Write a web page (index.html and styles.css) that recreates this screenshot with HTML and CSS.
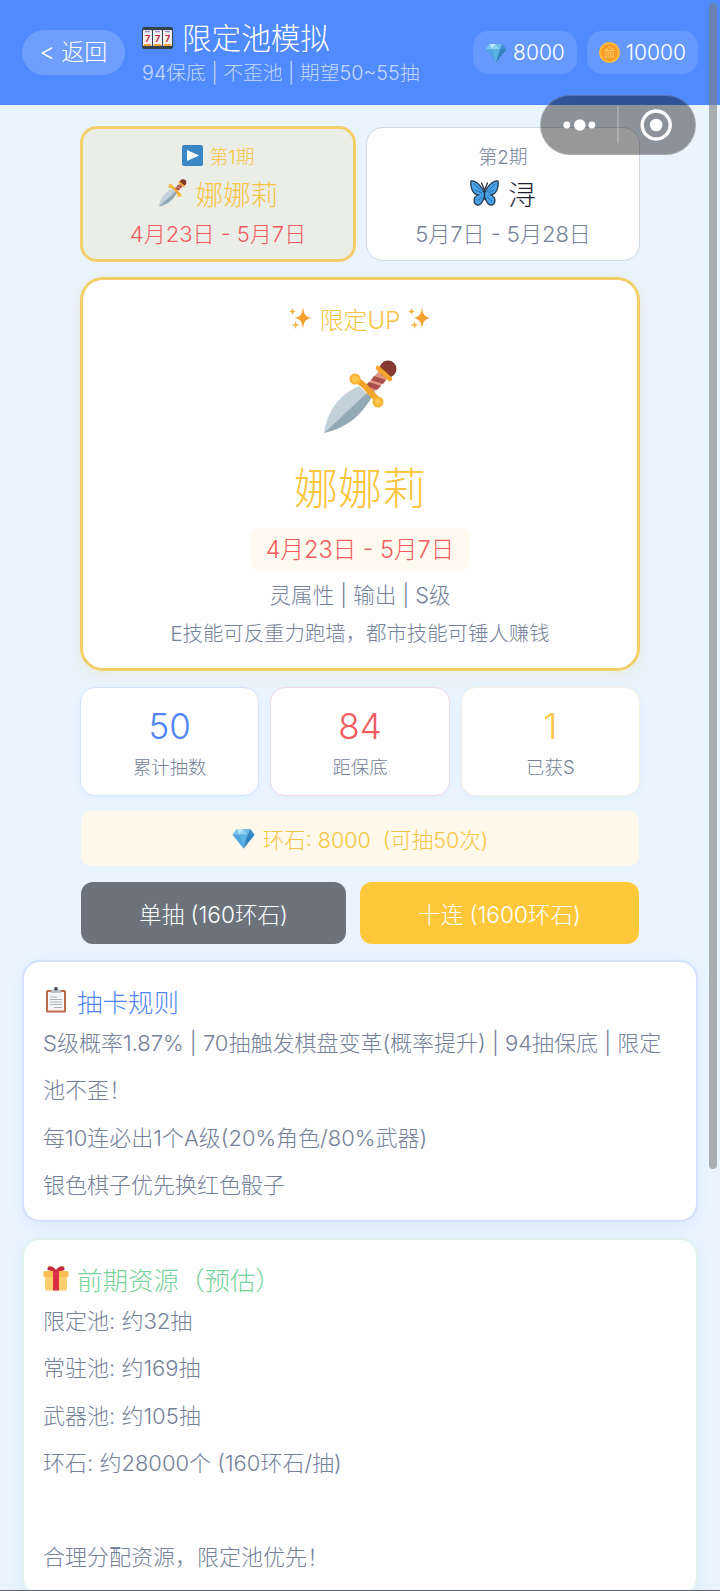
FILE: index.html
```html
<!DOCTYPE html>
<html lang="zh-CN">
<head>
<meta charset="utf-8">
<title>限定池模拟</title>
<link rel="stylesheet" href="styles.css">
</head>
<body>
<svg class="defs" width="0" height="0" aria-hidden="true">
  <defs>
    <linearGradient id="blade" x1="0" y1="0" x2="1" y2="1"><stop offset="0" stop-color="#c9d7de"/><stop offset="1" stop-color="#b4c6d0"/></linearGradient>
    <symbol id="dagger" viewBox="0 0 74 74">
      <path d="M1 73C4 53 14 36 36 26L44 34Z" fill="#c3d2da"/>
      <path d="M1 73L44 33L49 37C38 56 22 69 1 73Z" fill="#93a9b5"/>
      <path d="M42 27L56 11L64 19L49 34Z" fill="#e09483"/>
      <path d="M51 16l12 4-3 4-12-4zM46 22l12 4-4 4-12-4z" fill="#a9504c"/>
      <circle cx="65" cy="9" r="8.500" fill="#85392f"/>
      <path d="M55 8L67 19" stroke="#f3a42c" stroke-width="4.500" stroke-linecap="round"/>
      <path d="M33 20C43 24 44 31 57 42" fill="none" stroke="#f3a42c" stroke-width="6" stroke-linecap="round"/>
      <circle cx="32" cy="19" r="5.500" fill="#f9b433"/><circle cx="55" cy="42" r="5.500" fill="#f9b433"/>
      <circle cx="32" cy="19" r="3" fill="#fbc750"/><circle cx="55" cy="42" r="3" fill="#fbc750"/>
    </symbol>
    <symbol id="gem" viewBox="0 0 24 22">
      <path d="M5 1H19L23.500 7L12 21.500L.5 7Z" fill="#4fa3de"/>
      <path d="M5 1L7.500 7H.5Z" fill="#7cc5ea"/><path d="M5 1H12L7.500 7Z" fill="#b9e6f8"/>
      <path d="M12 1L16.500 7H7.500Z" fill="#8fd3f2"/><path d="M12 1H19L16.500 7Z" fill="#6bb9e8"/>
      <path d="M19 1L23.500 7H16.500Z" fill="#3d8dcd"/><path d="M7.500 7H16.500L12 21.500Z" fill="#5bb0e4"/>
      <path d="M16.500 7H23.500L12 21.500Z" fill="#337fba"/>
    </symbol>
    <symbol id="sparkles" viewBox="0 0 23 24">
      <path d="M14 1C15 8.500 16 10.500 22.500 12C16 13.500 15 15.500 14 23C13 15.500 12 13.500 5.500 12C12 10.500 13 8.500 14 1Z" fill="#f6a02e"/>
      <path d="M3.500 2L4.500 4.500L7 5.500L4.500 6.500L3.500 9L2.500 6.500L0 5.500L2.500 4.500ZM6.500 15L7.500 18L10.500 19L7.500 20L6.500 23L5.500 20L2.500 19L5.500 18Z" fill="#f2b54b"/>
    </symbol>
  </defs>
</svg>

<header class="header">
  <a class="back">&lt; 返回</a>
  <div class="titles">
    <h1 class="title">
      <svg class="slot" viewBox="0 0 31 22"><rect width="31" height="22" rx="2.500" fill="#33424b"/>
        <g fill="#f4f1f2"><rect x="1" y="3" width="9" height="16" rx="1"/><rect x="11" y="3" width="9" height="16" rx="1"/><rect x="21" y="3" width="9" height="16" rx="1"/></g>
        <path d="M3 4.500h5M13 4.500h5M23 4.500h5" stroke="#a58bd0" stroke-width="1.500"/>
        <path d="M2 18h7M12 18h7M22 18h7" stroke="#f3a43a" stroke-width="2"/>
        <g class="sevens"><text x="5.500" y="14.500">7</text><text x="15.500" y="14.500">7</text><text x="25.500" y="14.500">7</text></g></svg>
      <span>限定池模拟</span>
    </h1>
    <p class="subtitle">94保底 | 不歪池 | 期望50~55抽</p>
  </div>
  <div class="wallet">
    <span class="chip"><svg class="chip-gem"><use href="#gem"/></svg>8000</span>
    <span class="chip"><svg class="coin" viewBox="0 0 21 21"><circle cx="10.500" cy="10.500" r="10.500" fill="#fdbb3c"/><circle cx="10.500" cy="10.500" r="8.500" fill="#f99b27"/><path d="M5.500 8.500L10.500 5L15.500 8.500ZM7 9.500V14M9.300 9.500V14M11.700 9.500V14M14 9.500V14M5.500 15H15.500" fill="none" stroke="#ffcb66" stroke-width="1"/></svg>10000</span>
  </div>
</header>

<main class="page">
  <div class="column">
    <div class="tabs">
      <div class="tab tab-active">
        <div class="tab-period"><svg class="play" viewBox="0 0 21 21"><rect width="21" height="21" rx="2" fill="#3b86c4"/><path d="M5 5L17 10.500L5 16Z" fill="#fff"/></svg>第1期</div>
        <div class="tab-name"><svg class="dagger-small"><use href="#dagger"/></svg>娜娜莉</div>
        <div class="tab-date">4月23日 - 5月7日</div>
      </div>
      <div class="tab">
        <div class="tab-period">第2期</div>
        <div class="tab-name"><svg class="butterfly" viewBox="0 0 29 26">
          <path d="M14 12C10 3 4 .5 1 1C0 8 3 14 8 15C3 17 3 23 7 25C11 26 13 21 14.500 17C16 21 18 26 22 25C26 23 26 17 21 15C26 14 29 8 28 1C25 .5 19 3 15 12Z" fill="#4aa3e8" stroke="#23384f" stroke-width="1.300"/>
          <path d="M13 12L4 4M12 13L5 10M17 12L25 4M18 13L24 10M12 17L7 21M17 17L22 21" stroke="#286fa8" stroke-width="1"/>
          <path d="M14.500 9V19M14 9L11.500 3M15 9L17.500 3" stroke="#20303e" stroke-width="1.300" stroke-linecap="round"/></svg>浔</div>
        <div class="tab-date">5月7日 - 5月28日</div>
      </div>
    </div>

    <section class="banner">
      <div class="up"><svg class="spark"><use href="#sparkles"/></svg><span>限定UP</span><svg class="spark"><use href="#sparkles"/></svg></div>
      <svg class="dagger"><use href="#dagger"/></svg>
      <h2 class="hero">娜娜莉</h2>
      <div class="period">4月23日 - 5月7日</div>
      <p class="traits">灵属性 | 输出 | S级</p>
      <p class="skill">E技能可反重力跑墙，都市技能可锤人赚钱</p>
    </section>

    <div class="stats">
      <div class="stat stat-blue"><b>50</b><span>累计抽数</span></div>
      <div class="stat stat-red"><b>84</b><span>距保底</span></div>
      <div class="stat stat-gold"><b>1</b><span>已获S</span></div>
    </div>

    <div class="balance"><svg class="balance-gem"><use href="#gem"/></svg>环石: 8000&nbsp; (可抽50次)</div>

    <div class="actions">
      <button class="btn btn-single">单抽 (160环石)</button>
      <button class="btn btn-ten">十连 (1600环石)</button>
    </div>
  </div>

  <section class="card card-rules">
    <h3><svg class="clipboard" viewBox="0 0 22 26"><rect x="1" y="3" width="20" height="22.500" rx="1.500" fill="#c4694d"/><rect x="3" y="5" width="16" height="18.500" fill="#f5f6f7"/><path d="M6 6V3.500Q6 2.500 8 2.500H14Q16 2.500 16 3.500V6Z" fill="#b8c3c9"/><circle cx="11" cy="1.800" r="1.800" fill="#36454e"/><path d="M5 10H12M5 12.500H17M5 15H17M5 17.500H17M9 20.500H17" stroke="#aab4ba" stroke-width="1"/></svg>抽卡规则</h3>
    <p>S级概率1.87% | 70抽触发棋盘变革(概率提升) | 94抽保底 | 限定池不歪！</p>
    <p>每10连必出1个A级(20%角色/80%武器)</p>
    <p>银色棋子优先换红色骰子</p>
  </section>

  <section class="card card-resources">
    <h3><svg class="gift" viewBox="0 0 26 26"><rect x="2" y="10" width="22" height="15.500" rx="1" fill="#fdce6f"/><rect x=".5" y="6" width="25" height="6" rx="1.200" fill="#fbbd52"/><path d="M10 6H16V25.500H10Z" fill="#dc2f45"/><path d="M13 6C9 6 5 6 4.500 4.500C4 2.500 5.500 1 7.500 1.200C10 1.500 12 3.500 13 5C14 3.500 16 1.500 18.500 1.200C20.500 1 22 2.500 21.500 4.500C21 6 17 6 13 6Z" fill="#c9283c"/></svg>前期资源（预估）</h3>
    <p>限定池: 约32抽</p>
    <p>常驻池: 约169抽</p>
    <p>武器池: 约105抽</p>
    <p>环石: 约28000个 (160环石/抽)</p>
    <p>&nbsp;</p>
    <p>合理分配资源，限定池优先！</p>
  </section>
</main>

<div class="capsule">
  <svg viewBox="0 0 156 60"><g fill="#fff"><circle cx="25" cy="30" r="3.500"/><circle cx="38.500" cy="30" r="6"/><circle cx="51" cy="30" r="3.500"/><circle cx="117.500" cy="30" r="6.500"/></g><circle cx="117.500" cy="30" r="14.500" fill="none" stroke="#fff" stroke-width="3.500"/><path d="M78 10V49" stroke="#fff" stroke-opacity=".3" stroke-width="1.500"/></svg>
</div>
<div class="scrollbar"></div>
<div class="edge"></div>
</body>
</html>
```
FILE: styles.css
```css
* { box-sizing: border-box; }
body {
  margin: 0;
  width: 720px;
  height: 1591px;
  position: relative;
  overflow: hidden;
  background: #e9f4ff;
  color: #748199;
  font-family: Inter, "Noto Sans CJK SC", sans-serif;
  font-weight: 300;
  white-space: nowrap;
}
h1, h2, h3, p { margin: 0; font-weight: 300; }
svg { flex: none; }
.defs { position: absolute; }

.header {
  height: 105px;
  padding: 0 22px;
  display: flex;
  align-items: center;
  background: #4f8aff;
  color: #fff;
}
.back {
  width: 103px;
  height: 45px;
  border-radius: 23px;
  background: rgba(255, 255, 255, .18);
  font-size: 23px;
  line-height: 45px;
  text-align: center;
}
.titles { margin-left: 17px; height: 85px; padding-top: 8px; }
.title { display: flex; align-items: center; gap: 9px; height: 40px; font-size: 29.600px; line-height: 40px; }
.slot { width: 31px; height: 22px; }
.sevens { font: bold 9px Inter, sans-serif; text-anchor: middle; fill: #c6283c; }
.subtitle { font-size: 19.800px; line-height: 30px; color: rgba(255, 255, 255, .68); }
.wallet { margin-left: auto; display: flex; gap: 10px; }
.chip {
  display: flex;
  align-items: center;
  gap: 6px;
  height: 43px;
  padding: 0 12px;
  border-radius: 15px;
  background: rgba(255, 255, 255, .13);
  font-size: 21px;
}
.chip-gem { width: 22px; height: 20px; }
.coin { width: 21px; height: 21px; }

.page { padding-top: 21px; }
.column { width: 560px; margin: 0 auto; }
.tabs { display: flex; justify-content: space-between; align-items: center; }
.tab {
  width: 274px;
  height: 134px;
  padding-top: 14px;
  border: 1px solid #cfd8e3;
  border-radius: 17px;
  background: #fefeff;
  text-align: center;
}
.tab-active {
  width: 276px;
  height: 136px;
  padding-top: 13px;
  border: 3px solid #f3cf69;
  background: #ebeee7;
  color: #f6c443;
}
.tab > div { display: flex; align-items: center; justify-content: center; }
.tab-period { height: 26px; gap: 7px; font-size: 18.800px; }
.tab-name { height: 50px; gap: 9px; font-size: 27.500px; color: #1d2233; }
.tab-active .tab-name { color: #f6c443; }
.tab-date { height: 28px; font-size: 22px; }
.tab-active .tab-date { color: #f25b60; }
.play { width: 21px; height: 21px; }
.dagger-small { width: 29px; height: 28px; }
.butterfly { width: 29px; height: 26px; }

.banner {
  display: flex;
  flex-direction: column;
  align-items: center;
  height: 394px;
  margin-top: 15px;
  padding-top: 20px;
  border: 3px solid #f3cf69;
  border-radius: 23px;
  background: #fefeff;
  box-shadow: 0 4px 16px rgba(246, 200, 80, .18);
}
.up { display: flex; align-items: center; gap: 8px; height: 36px; color: #f6c443; font-size: 24px; }
.spark { width: 23px; height: 24px; }
.dagger { width: 74px; height: 74px; margin-top: 24px; }
.hero { margin-top: 25px; color: #fbc53e; font-size: 44px; line-height: 60px; }
.period {
  width: 219px;
  height: 43px;
  margin-top: 9px;
  border-radius: 8px;
  background: #fffaef;
  color: #f25b60;
  font-size: 23.500px;
  line-height: 43px;
  text-align: center;
}
.traits { margin-top: 8px; font-size: 21.600px; line-height: 32px; }
.skill { margin-top: 7px; font-size: 20.400px; line-height: 32px; }

.stats { display: grid; grid-template-columns: repeat(3, 1fr); gap: 11px; margin-top: 16px; }
.stat {
  display: flex;
  flex-direction: column;
  align-items: center;
  height: 109px;
  padding-top: 17px;
  border: 1px solid #d5e2fb;
  border-radius: 15px;
  background: #fefeff;
  box-shadow: 0 2px 6px rgba(80, 130, 220, .06);
}
.stat b { height: 42px; font-size: 35px; font-weight: 300; line-height: 42px; color: #4f85f6; }
.stat span { margin-top: 6px; font-size: 18.400px; line-height: 28px; }
.stat-red { border-color: #f3dbe5; }
.stat-red b { color: #f25b60; }
.stat-gold { border-color: #f3efe0; }
.stat-gold b { color: #fbc53e; }

.balance {
  display: flex;
  align-items: center;
  justify-content: center;
  gap: 8px;
  height: 55px;
  margin: 15px 1px 0;
  border-radius: 10px;
  background: #fff9eb;
  color: #f6c443;
  font-size: 21.500px;
}
.balance-gem { width: 23px; height: 21px; }

.actions { display: flex; gap: 14px; margin: 16px 1px 0; }
.btn {
  width: 265px;
  height: 62px;
  padding: 0;
  border: 0;
  border-radius: 12px;
  background: #6c737d;
  color: #fff;
  font: inherit;
  font-size: 22.600px;
}
.btn-ten { flex: 1; background: #ffc83b; }

.card {
  width: 676px;
  height: 262px;
  margin: 16px auto 0;
  padding: 18px 18px 0 19px;
  border: 2px solid #d3e0fb;
  border-radius: 18px;
  background: #fefeff;
  box-shadow: 0 4px 14px rgba(80, 130, 220, .09);
  white-space: normal;
}
.card h3 { display: flex; align-items: center; gap: 10px; height: 40px; font-size: 25.500px; color: #4f85f6; }
.card p { font-size: 22px; line-height: 47.300px; }
.card-resources { height: 358px; border-color: #dff3ee; }
.card-resources h3 { gap: 8px; color: #76d39c; }
.clipboard { width: 22px; height: 26px; margin-left: 2px; }
.gift { width: 26px; height: 26px; }

.capsule {
  position: absolute;
  left: 540px;
  top: 95px;
  width: 156px;
  height: 60px;
  border: 1px solid rgba(255, 255, 255, .2);
  border-radius: 30px;
  background: rgba(0, 0, 0, .4);
}
.capsule svg { display: block; width: 154px; height: 58px; }
.scrollbar {
  position: absolute;
  left: 709px;
  top: 3px;
  width: 8px;
  height: 1166px;
  border-radius: 4px;
  background: rgba(125, 125, 125, .6);
}
.edge { position: absolute; left: 0; bottom: 0; width: 720px; height: 1px; background: #5c6168; }
```
